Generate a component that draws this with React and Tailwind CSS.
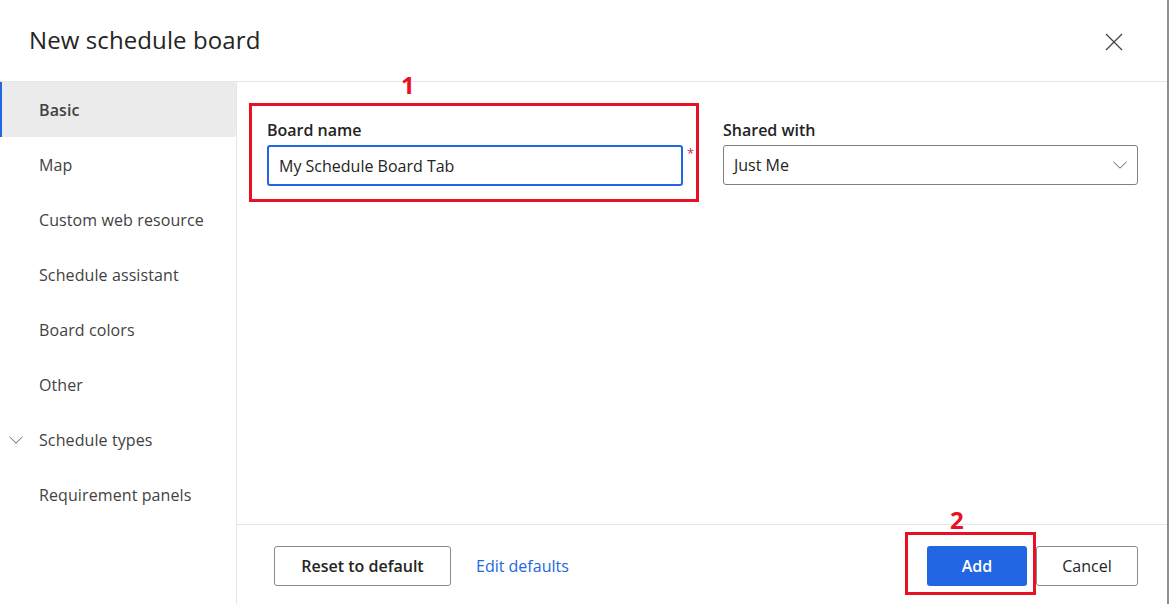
import React from "react";

const font = { fontFamily: '"Open Sans", "Noto Sans", sans-serif' };

function Chevron({ className }) {
  return (
    <svg className={className} width="14" height="8" viewBox="0 0 14 8" fill="none">
      <path d="M0.5 0.8 L7 7.2 L13.5 0.8" stroke="#616161" strokeWidth="1" />
    </svg>
  );
}

const items = [
  "Basic",
  "Map",
  "Custom web resource",
  "Schedule assistant",
  "Board colors",
  "Other",
  "Schedule types",
  "Requirement panels",
];

export default function App() {
  return (
    <div
      className="w-[1169px] h-[604px] bg-white flex flex-col border-r-2 border-[#8e8e8e] text-[#242424] overflow-hidden"
      style={font}
    >
      {/* Header */}
      <div className="h-[82px] shrink-0 flex items-center justify-between pl-[29px] pr-[44px] border-b border-[#e6e6e6]">
        <h1 className="text-[24px] leading-none font-normal text-[#242424] tracking-[0.1px] pb-[1px]">
          New schedule board
        </h1>
        <svg width="18" height="18" viewBox="0 0 18 18" fill="none" className="mt-[3px]">
          <path d="M1 1 L17 17 M17 1 L1 17" stroke="#424242" strokeWidth="1.2" />
        </svg>
      </div>

      {/* Body */}
      <div className="flex flex-1 min-h-0">
        {/* Sidebar */}
        <div className="w-[237px] shrink-0 border-r border-[#e6e6e6] flex flex-col">
          {items.map((it, i) => (
            <div
              key={it}
              className={
                "relative h-[55px] flex items-center pl-[39px] text-[16px] tracking-[0.1px] " +
                (i === 0
                  ? "bg-[#ebebeb] font-semibold text-[#424242] rounded-r-[3px]"
                  : "text-[#424242]")
              }
            >
              {i === 0 && (
                <span className="absolute left-0 top-0 bottom-0 w-[2px] bg-[#2266e3]" />
              )}
              {it === "Schedule types" && (
                <Chevron className="absolute left-[9px] top-[24px]" />
              )}
              {it}
            </div>
          ))}
        </div>

        {/* Content */}
        <div className="flex-1 flex flex-col min-w-0">
          <div className="flex-1 pt-[36px] pl-[30px] pr-[29px]">
            <div className="flex">
              {/* Board name */}
              <div className="relative flex">
                <div className="w-[416px]">
                  <div className="text-[16px] font-semibold leading-[24px] mb-[3px] text-[#242424]">
                    Board name
                  </div>
                  <div className="h-[41px] border-2 border-[#2266e3] rounded-[3px] flex items-center pl-[10px] text-[16px] text-[#242424]">
                    My Schedule Board Tab
                  </div>
                </div>
                <span className="text-[#c4314b] text-[13px] leading-none ml-[4px] mt-[29px]">*</span>
                {/* annotation */}
                <div className="absolute left-[-18px] top-[-15px] w-[450px] h-[99px] border-[3px] border-[#e81123] pointer-events-none" />
                <div className="absolute left-[134px] top-[-45px] text-[24px] font-bold leading-none text-[#e81123]">
                  1
                </div>
              </div>

              {/* Shared with */}
              <div className="ml-auto w-[415px]">
                <div className="text-[16px] font-semibold leading-[24px] mb-[3px] text-[#242424]">
                  Shared with
                </div>
                <div className="h-[40px] border border-[#808080] rounded-[3px] flex items-center justify-between pl-[10px] pr-[10px] text-[16px] text-[#242424]">
                  <span>Just Me</span>
                  <Chevron />
                </div>
              </div>
            </div>
          </div>

          {/* Footer */}
          <div className="h-[80px] shrink-0 border-t border-[#e6e6e6] flex items-center pl-[37px] pr-[29px] pt-[3px]">
            <button className="h-[40px] w-[177px] border border-[#8a8a8a] rounded-[3px] text-[16px] font-semibold text-[#242424] bg-white">
              Reset to default
            </button>
            <span className="ml-[25px] text-[16px] text-[#2266e3]">Edit defaults</span>
            <div className="ml-auto flex items-center gap-[9px]">
              <div className="relative">
                <button className="h-[40px] w-[100px] bg-[#2266e3] rounded-[3px] text-[16px] font-semibold text-white">
                  Add
                </button>
                <div className="absolute left-[-22px] top-[-14px] w-[131px] h-[63px] border-[3px] border-[#e81123] pointer-events-none" />
                <div className="absolute left-[23px] top-[-38px] text-[24px] font-bold leading-none text-[#e81123]">
                  2
                </div>
              </div>
              <button className="h-[40px] w-[102px] border border-[#8a8a8a] rounded-[3px] text-[16px] text-[#242424] bg-white">
                Cancel
              </button>
            </div>
          </div>
        </div>
      </div>
    </div>
  );
}
